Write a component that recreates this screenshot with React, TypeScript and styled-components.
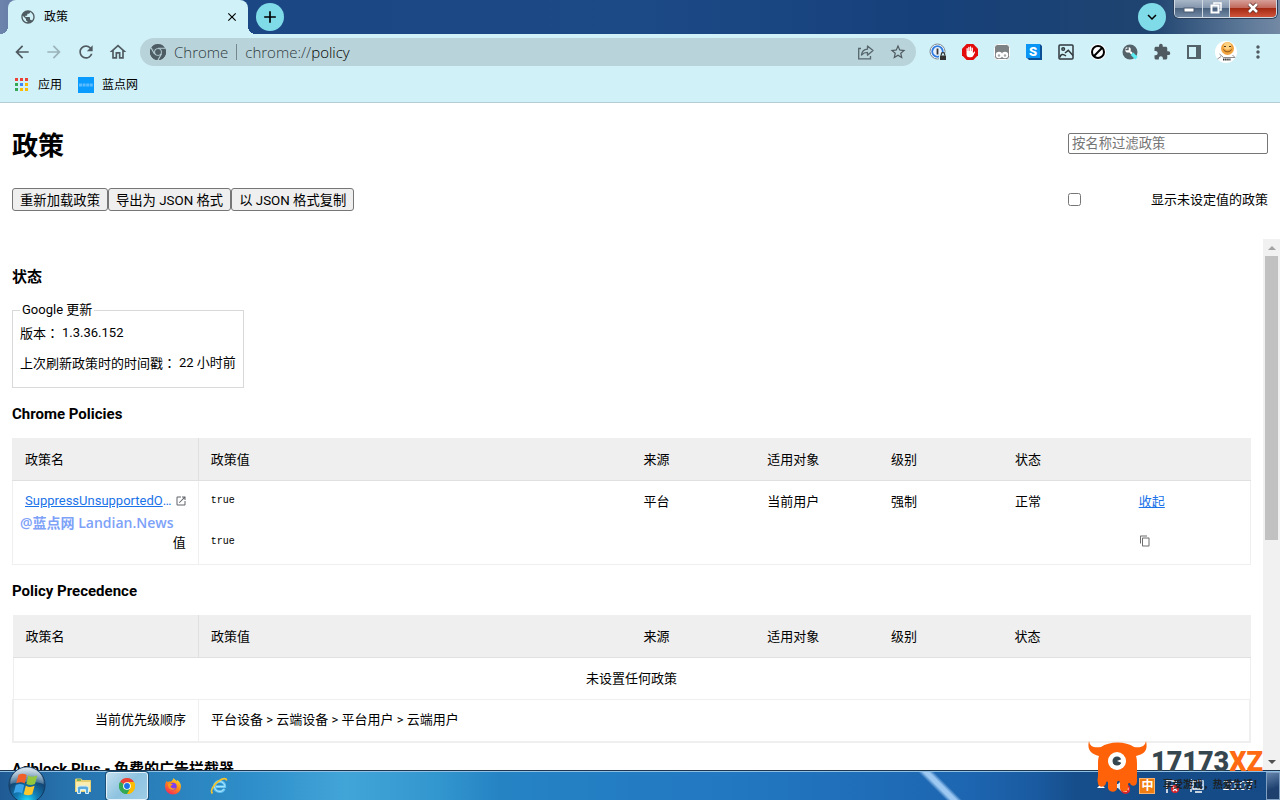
import React from "react";
import styled, { createGlobalStyle } from "styled-components";
import {
  MdPublic,
  MdClose,
  MdAdd,
  MdArrowBack,
  MdArrowForward,
  MdRefresh,
  MdOutlineHome,
  MdStarBorder,
  MdExtension,
  MdMoreVert,
  MdOpenInNew,
  MdContentCopy,
  MdKeyboardArrowDown,
} from "react-icons/md";

const pageFont = `Roboto, "Noto Sans CJK SC", sans-serif`;
const uiFont = `"Open Sans", "Noto Sans CJK SC", sans-serif`;

const GlobalStyle = createGlobalStyle`
  *, *::before, *::after { box-sizing: border-box; }
  body { margin: 0; background: #fff; color: #000; font: 13px/18px ${pageFont}; }
  svg { display: block; flex: none; }
`;

const Screen = styled.div`
  display: flex;
  flex-direction: column;
  height: 100vh;
  overflow: hidden;
  position: relative;
`;

/* ---------- browser frame ---------- */

const TitleBar = styled.header`
  flex: none;
  display: flex;
  align-items: flex-start;
  height: 34px;
  padding-left: 8px;
  background: linear-gradient(90deg, #6d84ac 0, #4b6a9c 60px, #1b4785 240px, #1c4a86 50%, #16407a 72%, #1f4470 90%, #5b7797 97%, #7389a4 100%);
`;

const Tab = styled.div`
  position: relative;
  display: flex;
  align-items: center;
  width: 240px;
  height: 34px;
  padding: 0 9px 0 12px;
  border-radius: 8px 8px 0 0;
  background: #d1f1f8;
  font: 12px/16px ${uiFont};
  &::before,
  &::after {
    content: "";
    position: absolute;
    bottom: 0;
    width: 8px;
    height: 8px;
  }
  &::before { left: -8px; background: radial-gradient(circle at 0 0, transparent 8px, #d1f1f8 8px); }
  &::after { right: -8px; background: radial-gradient(circle at 100% 0, transparent 8px, #d1f1f8 8px); }
`;

const TabTitle = styled.span`
  flex: 1;
  margin-left: 8px;
`;

const IconButton = styled.button<{ $size?: number; $color?: string }>`
  display: flex;
  align-items: center;
  justify-content: center;
  flex: none;
  width: ${(p) => p.$size ?? 20}px;
  height: ${(p) => p.$size ?? 20}px;
  padding: 0;
  border: 0;
  background: none;
  color: ${(p) => p.$color ?? "#4f5b60"};
`;

const RoundButton = styled(IconButton)`
  width: 28px;
  height: 28px;
  margin: 3px 8px 0;
  border-radius: 50%;
  background: #80dbe8;
  color: #000;
`;

const Spacer = styled.div`
  flex: 1;
`;

const WindowControls = styled.div`
  display: flex;
  height: 18px;
  margin: 0 3px 0 0;
  border: 1px solid #cfd9e4;
  border-top: 0;
  border-radius: 0 0 5px 5px;
  overflow: hidden;
  box-shadow: 0 0 0 1px #2c3f5a;
`;

const WindowButton = styled.button<{ $close?: boolean }>`
  display: flex;
  align-items: center;
  justify-content: center;
  width: ${(p) => (p.$close ? 47 : 27)}px;
  padding: 0 0 2px;
  border: 0;
  background: ${(p) =>
    p.$close
      ? "linear-gradient(#d6a099 0, #c26a5d 45%, #a52a14 50%, #d0543a 100%)"
      : "linear-gradient(#a9b7c8 0, #8496ad 45%, #4b627f 50%, #7189a5 100%)"};
  & + & { border-left: 1px solid #cfd9e4; }
`;

const Toolbar = styled.div`
  flex: none;
  display: flex;
  align-items: center;
  height: 36px;
  padding: 0 12px;
  gap: 12px;
  background: #d1f1f8;
`;

const Omnibox = styled.div`
  flex: 1;
  display: flex;
  align-items: center;
  height: 28px;
  padding: 0 8px 0 10px;
  border-radius: 14px;
  background: #b9d3da;
  font: 300 15px/20px ${uiFont};
  color: #2f3b40;
`;

const Origin = styled.span`
  margin: 0 8px;
  padding-right: 8px;
  line-height: 16px;
  border-right: 1px solid #74878d;
`;

const Address = styled.span`
  flex: 1;
  b { font-weight: 300; color: #000; }
`;

const OmniActions = styled.div`
  display: flex;
  gap: 12px;
`;

const Extensions = styled.div`
  display: flex;
  align-items: center;
  gap: 12px;
`;

const Bookmarks = styled.nav`
  flex: none;
  display: flex;
  align-items: center;
  gap: 16px;
  height: 33px;
  padding: 0 14px 2px;
  background: #d1f1f8;
  border-bottom: 1px solid #b4cdd3;
`;

const Bookmark = styled.a`
  display: flex;
  align-items: center;
  gap: 8px;
  color: #000;
  text-decoration: none;
  font: 12px/16px ${uiFont};
`;

/* ---------- policy page ---------- */

const PageHeader = styled.header`
  flex: none;
  display: flex;
  flex-direction: column;
  gap: 20px;
  height: 136px;
  padding: 21px 12px 0;
`;

const HeaderRow = styled.div`
  display: flex;
  align-items: center;
  justify-content: space-between;
`;

const Title = styled.h1`
  margin: 0;
  font-size: 26px;
  line-height: 44px;
  font-weight: 700;
`;

const FilterInput = styled.input`
  width: 200px;
  height: 21px;
  margin: 0 0 5px;
  padding: 1px 3px;
  border: 1px solid #767676;
  border-radius: 2px;
  font-family: ${pageFont};
  &::placeholder { color: #757575; }
`;

const ButtonGroup = styled.div`
  display: flex;
`;

const ActionButton = styled.button`
  height: 23px;
  padding: 0 7px;
  border: 1px solid #767676;
  border-radius: 3px;
  background: #efefef;
  color: #000;
  font-family: ${pageFont};
`;

const UnsetOption = styled.label`
  display: flex;
  align-items: center;
  justify-content: space-between;
  width: 200px;
  input { margin: 0; width: 13px; height: 13px; }
`;

const ScrollArea = styled.div`
  flex: 1;
  min-height: 0;
  display: flex;
`;

const Content = styled.main`
  flex: 1;
  min-width: 0;
  overflow: hidden;
  padding: 12px 12px 0;
`;

const Heading = styled.h2`
  margin: 16px 0 14px;
  font-size: 15px;
  line-height: 20px;
  font-weight: 700;
`;

const StatusBox = styled.fieldset`
  width: max-content;
  min-width: 0;
  margin: 0;
  padding: 5px 7px 14px;
  border: 1px solid #d9d9d9;
  legend { padding: 0 2px; }
`;

const StatusRow = styled.div`
  display: flex;
  gap: 3px;
  & + & { margin-top: 11px; }
`;

/* this face centres the full-width colon in its cell */
const Colon = styled.span`
  font-family: "Noto Sans CJK TC", sans-serif;
`;

const PolicyTable = styled.table`
  width: 100%;
  table-layout: fixed;
  border-collapse: collapse;
  border: 1px solid #efefef;
`;

const HeadCell = styled.th<{ $width: number }>`
  width: ${(p) => p.$width}%;
  height: 42px;
  padding: 1px 12px 0;
  text-align: left;
  font-weight: 400;
  background: #efefef;
  border-bottom: 1px solid #e0e0e0;
  &:first-child { border-right: 1px solid #e0e0e0; }
`;

const Cell = styled.td<{ $align?: string }>`
  height: 42px;
  padding: 0 12px;
  text-align: ${(p) => p.$align ?? "left"};
  &:first-child:not([colspan]) { border-right: 1px solid #efefef; }
`;

const Row = styled.tr<{ $framed?: boolean }>`
  ${(p) => p.$framed && "border: 2px solid #efefef; border-top-width: 1px;"}
`;

const PolicyName = styled.div`
  display: flex;
  align-items: center;
  gap: 2px;
  margin-right: -1px;
  padding-bottom: 2px;
  color: #5f6368;
  a {
    flex: 1;
    overflow: hidden;
    text-overflow: ellipsis;
    white-space: nowrap;
  }
`;

const Link = styled.a`
  color: #1a73e8;
  text-decoration: underline;
`;

const Value = styled.code`
  display: block;
  padding-bottom: 2px;
  font: 10px/18px "Liberation Mono", monospace;
`;

const CopyButton = styled(IconButton)`
  width: 12px;
  height: 12px;
  margin-bottom: 4px;
  color: #6e6e6e;
`;

const Scrollbar = styled.div`
  flex: none;
  display: flex;
  flex-direction: column;
  align-items: center;
  width: 17px;
  background: #f1f1f1;
`;

const Thumb = styled.div`
  width: 13px;
  height: 53.5%;
  background: #c1c1c1;
`;

const ScrollArrow = styled.div<{ $down?: boolean }>`
  display: flex;
  align-items: center;
  height: 17px;
  margin-top: ${(p) => (p.$down ? "auto" : "0")};
`;

const SourceMark = styled.div`
  position: absolute;
  left: 20px;
  top: 513px;
  color: #7da2f8;
  font: 600 14px/20px "Open Sans", "Noto Sans CJK SC", sans-serif;
`;

/* ---------- desktop taskbar ---------- */

const Taskbar = styled.footer`
  flex: none;
  position: relative;
  display: flex;
  align-items: center;
  height: 30px;
  border-top: 1px solid #1c3650;
  box-shadow: inset 0 1px 0 #8fc0e4;
  background:
    linear-gradient(45deg, transparent 41%, #9cc8f2 47%, #9cc8f2 53%, transparent 59%) 910px 0 / 60px 30px no-repeat,
    linear-gradient(90deg, #205a94 0, #2672ad 5%, #2e8fca 20%, #42a5d8 27%, #3397cf 34%, #2583c4 39%, #2277c1 58%, #1d65b0 76%, #1a5aa0 81%, #164e8b 84%, #154a85 100%);
`;

const StartSlot = styled.div`
  display: flex;
  width: 60px;
`;

const StartButton = styled.button`
  height: 29px;
  padding: 0 0 0 8px;
  border: 0;
  background: none;
  svg { margin-top: -5px; overflow: visible; }
`;

const TaskButton = styled.button<{ $active?: boolean }>`
  display: flex;
  align-items: center;
  justify-content: center;
  width: ${(p) => (p.$active ? 42 : 46)}px;
  height: 28px;
  margin-right: ${(p) => (p.$active ? 2 : 0)}px;
  padding: 0;
  border: 1px solid ${(p) => (p.$active ? "#e4f3fb" : "transparent")};
  border-radius: 3px;
  background: ${(p) => (p.$active ? "linear-gradient(135deg, #c2dfef, #8ec3e0 50%, #9dcde6)" : "none")};
  box-shadow: ${(p) => (p.$active ? "0 0 0 1px #1d4e74" : "none")};
`;

const Tray = styled.div`
  display: flex;
  align-items: center;
  gap: 9px;
  margin-left: auto;
  color: #fff;
  font: 12px/16px ${uiFont};
`;

const Clock = styled.time`
  margin: 0 4px 0 8px;
`;

const Ime = styled.span`
  width: 16px;
  height: 16px;
  background: #f07d12;
  border: 1px solid #f9b06a;
  text-align: center;
  font-weight: 700;
  line-height: 14px;
`;

const ShowDesktop = styled.button`
  width: 14px;
  height: 28px;
  padding: 0;
  border: 1px solid #7f9fc3;
  background: linear-gradient(160deg, #6484ab, #1d406f 60%);
`;

const SiteBadge = styled.div`
  position: absolute;
  right: 17px;
  bottom: 7px;
  display: flex;
  align-items: flex-end;
  gap: 3px;
`;

const BadgeText = styled.div`
  display: flex;
  flex-direction: column;
  align-items: flex-end;
  color: #37474f;
  strong {
    font: 900 27px/30px Roboto, sans-serif;
    white-space: nowrap;
  }
  em { font-style: normal; color: #ff6a13; }
  small { font: 700 10px/16px ${pageFont}; color: #1c2226; white-space: nowrap; }
`;

/* ---------- drawings ---------- */

const ChromeMark = ({ size, mono }: { size: number; mono?: boolean }) => {
  const c = mono ? ["#4e5d63", "#4e5d63", "#4e5d63"] : ["#ea4335", "#fbbc04", "#34a853"];
  return (
    <svg width={size} height={size} viewBox="0 0 24 24">
      <path d="M12 12 1.6 6A12 12 0 0 1 22.4 6Z" fill={c[0]} />
      <path d="M12 12 22.4 6A12 12 0 0 1 12 24Z" fill={c[1]} />
      <path d="M12 12V24A12 12 0 0 1 1.6 6Z" fill={c[2]} />
      <path d="M12 6h10.4A12 12 0 0 1 12 24l5.2-9Z" fill={c[1]} />
      <path d="M6.8 15 1.6 6A12 12 0 0 0 12 24l5.2-9Z" fill={c[2]} />
      {mono && <path d="M12 6.3h11M6.8 15 1.6 6M17.2 15 12 24" stroke="#b9d3da" strokeWidth="1.6" />}
      <circle cx="12" cy="12" r="5.8" fill={mono ? "#b9d3da" : "#fff"} />
      <circle cx="12" cy="12" r="4.4" fill={mono ? "#4e5d63" : "#1a73e8"} />
    </svg>
  );
};

const ShareIcon = () => (
  <svg width="18" height="18" viewBox="0 0 18 18" fill="none" stroke="#56666c" strokeWidth="1.3">
    <path d="M4 5.500H1.700v10.300H13.500V13" />
    <path d="M4.500 12c.4-3.800 2.500-5.600 6-5.800V3l5.500 4.600-5.500 4.600V9.300C7.900 9.300 6 10.200 4.500 12Z" strokeLinejoin="round" />
  </svg>
);

const OnePassword = () => (
  <svg width="20" height="20" viewBox="0 0 20 20">
    <circle cx="9.500" cy="9.500" r="7.500" fill="#fff" stroke="#7b8790" />
    <circle cx="9.500" cy="9.500" r="5.300" fill="#e9f2fc" stroke="#2f7de0" strokeWidth="1.800" />
    <path d="M9.500 6.500v6" stroke="#333" strokeWidth="1.800" />
    <rect x="11" y="11" width="8" height="8" rx="2" fill="#d1f1f8" />
    <rect x="12" y="13.500" width="6" height="4.500" fill="#333" />
    <path d="M13.300 13.500v-1.200a1.700 1.700 0 0 1 3.400 0v1.200" fill="none" stroke="#333" strokeWidth="1.200" />
  </svg>
);

const BlockHand = () => (
  <svg width="18" height="18" viewBox="0 0 18 18">
    <path d="M5.700 1h6.600L17 5.700v6.600L12.300 17H5.700L1 12.300V5.700Z" fill="#e30b0b" />
    <path d="M5.500 9.500V5.600c0-.9 1.300-.9 1.300 0V8h.4V4.400c0-.9 1.300-.9 1.300 0V8h.4V4c0-.9 1.300-.9 1.300 0v4h.4V5.200c0-.9 1.300-.9 1.300 0v5l1-1.300c.6-.7 1.500-.1 1.100.700l-2 3.600c-.8 1.300-5 1.500-6 0-.4-.8-.5-2-.5-3.700Z" fill="#fff" />
  </svg>
);

const MonkeyIcon = () => (
  <svg width="18" height="18" viewBox="0 0 18 18">
    <rect x="1.500" y="1.500" width="15" height="15" rx="3" fill="#7d8284" stroke="#fff" />
    <circle cx="6" cy="12" r="3.200" fill="#fff" />
    <circle cx="12" cy="12" r="3.200" fill="#fff" />
    <circle cx="6" cy="12.500" r="1.200" fill="#a5a9ab" />
    <circle cx="12" cy="12.500" r="1.200" fill="#a5a9ab" />
  </svg>
);

const LetterCube = () => (
  <svg width="18" height="18" viewBox="0 0 18 18">
    <path d="M1 1h14l2 2v14H4l-3-3Z" fill="#0a4f96" />
    <rect x="1" y="1" width="14" height="14" fill="#0b96f5" />
    <text x="8" y="12.500" textAnchor="middle" fill="#fff" fontFamily="Roboto" fontWeight="900" fontSize="13">S</text>
  </svg>
);

const PictureIcon = () => (
  <svg width="18" height="18" viewBox="0 0 18 18" fill="none" stroke="#30383c" strokeWidth="1.500">
    <rect x="2" y="2" width="14" height="14" rx="1" />
    <circle cx="6.200" cy="6" r="1.300" />
    <path d="M3 14.500c.5-3.500 3-3.800 6-1.500M8 10l3.300-2.700L16 12.500" />
  </svg>
);

const BanIcon = () => (
  <svg width="18" height="18" viewBox="0 0 18 18">
    <circle cx="9" cy="9" r="8" fill="#fff" />
    <circle cx="9" cy="9" r="6" fill="none" stroke="#000" strokeWidth="2" />
    <path d="m4.800 13.200 8.400-8.400" stroke="#000" strokeWidth="2" />
  </svg>
);

const KeyTool = () => (
  <svg width="18" height="18" viewBox="0 0 18 18">
    <circle cx="9" cy="9" r="7.500" fill="#54626a" />
    <circle cx="7" cy="6.800" r="2.800" fill="#fff" />
    <path d="M7 3.500v3H4.500" fill="none" stroke="#54626a" strokeWidth="1.400" />
    <path d="m9 8.800 2 2" stroke="#fff" strokeWidth="2.200" />
    <path d="m11 10.800 4.500 4.500" stroke="#5bedf2" strokeWidth="3.600" />
  </svg>
);

const SidePanel = () => (
  <svg width="16" height="16" viewBox="0 0 16 16">
    <path d="M1 1h14v14H1Z" fill="#54626a" />
    <path d="M3 3h7v10H3Z" fill="#d1f1f8" />
  </svg>
);

const Avatar = () => (
  <svg width="22" height="22" viewBox="0 0 22 22">
    <circle cx="11" cy="11" r="11" fill="#fff" />
    <circle cx="12.500" cy="7.500" r="6.500" fill="#f0a440" />
    <circle cx="12.500" cy="5" r="3.800" fill="#fbd080" />
    <path d="M9 5.500h2M14 5.500h2" stroke="#4c3414" />
    <path d="M8.500 8.500c1.500 3 6.500 3 8 0" fill="none" stroke="#7d4c14" />
    <path d="m4.500 13 4 3.500H20L17.500 14M2.500 18 6 15.500" fill="none" stroke="#8c8c8c" />
    <path d="M8 18.500h7.500" stroke="#333" strokeWidth="2" strokeDasharray="1.500 .6" />
  </svg>
);

const AppsGrid = () => (
  <svg width="16" height="14" viewBox="0 0 16 14">
    {["#ea4335", "#ea4335", "#ea4335", "#34a853", "#4285f4", "#fbbc04", "#34a853", "#fbbc04", "#fbbc04"].map((c, i) => (
      <rect key={i} x={1 + (i % 3) * 5} y={Math.floor(i / 3) * 5} width="3" height="3" fill={c} />
    ))}
  </svg>
);

const SiteIcon = () => (
  <svg width="16" height="16" viewBox="0 0 16 16">
    <rect width="16" height="16" fill="#0a9bff" />
    <path d="M1 8h14" stroke="#5bbcff" strokeWidth="3" strokeDasharray="3 .6" />
  </svg>
);

const StartOrb = () => (
  <svg width="38" height="38" viewBox="0 0 38 38">
    <defs>
      <radialGradient id="orb" cx="50%" cy="95%" r="85%">
        <stop offset="0" stopColor="#1fe0ff" />
        <stop offset=".35" stopColor="#137fb8" />
        <stop offset=".75" stopColor="#124674" />
        <stop offset="1" stopColor="#8fadc4" />
      </radialGradient>
      <linearGradient id="orbGloss" x1="0" y1="0" x2="0" y2="1">
        <stop offset="0" stopColor="#e7eff5" stopOpacity=".9" />
        <stop offset="1" stopColor="#7fa3bf" stopOpacity=".45" />
      </linearGradient>
    </defs>
    <circle cx="19" cy="19" r="18" fill="url(#orb)" stroke="#12395f" />
    <path d="M2.500 18a16.500 16.500 0 0 1 33 0c-8-3-24-3-33 0Z" fill="url(#orbGloss)" />
    <path d="M10.500 8.800c3-1.600 5.600-1.500 8.200.1l-2 8.500c-2.500-1.600-5-1.700-8.500-.2Z" fill="#f0602a" />
    <path d="M20.300 9.500c2.700 1.500 5.200 1.600 9 .1l-2.300 8.500c-3 1.400-5.900 1.300-8.600-.1Z" fill="#93c83e" />
    <path d="M7.800 19c3.200-1.500 5.800-1.400 8.400.1l-2.100 8.500c-2.500-1.600-5-1.700-8.500-.2Z" fill="#3ba3e8" />
    <path d="M17.800 19.700c2.700 1.500 5.600 1.600 8.800.1l-2.300 8.500c-3 1.400-5.900 1.300-8.600-.1Z" fill="#fcc82e" />
  </svg>
);

const FolderIcon = () => (
  <svg width="18" height="18" viewBox="0 0 18 18">
    <path d="M1 3c0-1 .5-1.500 1.500-1.500H7L8.500 3H16c.7 0 1 .4 1 1v11H1Z" fill="#e7cf73" />
    <path d="M2 5h14v9H2Z" fill="#f8ecae" />
    <path d="M3 3h4" stroke="#49a84d" strokeWidth="1.300" />
    <path d="M3.500 16.500v-5c0-1.500 1-2.500 2.500-2.500h6c1.500 0 2.500 1 2.500 2.500v5h-3v-4h-5v4Z" fill="#5aabdd" stroke="#d7eefb" />
  </svg>
);

const FirefoxIcon = () => (
  <svg width="18" height="18" viewBox="0 0 18 18">
    <defs>
      <linearGradient id="fox" x1=".8" y1="0" x2=".2" y2="1">
        <stop offset="0" stopColor="#ffe226" />
        <stop offset=".45" stopColor="#ff8a16" />
        <stop offset="1" stopColor="#f5235f" />
      </linearGradient>
    </defs>
    <path d="M9.500 1c1 1.700 2.700 2 3.300 3.300.4-.4.300-1 .1-1.500 3 2 4.100 4.500 4.100 6.700A8 8 0 0 1 1 9.500c0-2.700.8-4.500 2-6 0 .8.200 1.300.6 1.700.8-.7 2.200-.9 3.200-.4C7.600 4 8.800 3.200 9.500 1Z" fill="url(#fox)" />
    <circle cx="9" cy="9.500" r="3.700" fill="#7b3ff0" />
    <path d="M4 7c1.800-1 3.800-.4 5 .8-1.700.1-1.900 1.200-2.600 1.500.6 2 3 2.800 5.400 1.700-1.800 3.300-8 2.300-7.800-4Z" fill="#ff9a1c" />
  </svg>
);

const ExplorerIcon = () => (
  <svg width="18" height="18" viewBox="0 0 18 18" fill="none">
    <path d="M14.300 11.800c-2.300 4.500-9.800 3.200-9.800-2.400 0-6.800 10.500-6.300 10.300.2H6" stroke="#62c3f2" strokeWidth="2.800" />
    <path d="M14.300 11.800c-2.300 4.500-9.800 3.200-9.800-2.400 0-6.800 10.500-6.300 10.300.2H6" stroke="#b3e6fb" strokeWidth="1" />
    <path d="M2.500 16.500C-.5 14 4 7 9.500 3.500c3.500-2.300 7-2.800 7 0" stroke="#f4c32b" strokeWidth="1.700" />
  </svg>
);

const Monster = () => (
  <svg width="60" height="54" viewBox="0 0 60 54">
    <path
      d="M1 2c1 6 5 7 12 6C21 2 38 2 46 8c6 1 11 0 12-6 2 9-1 13-10 15 1 3 1 6 1 10v15c0 6-6 6-7 2-1 0-2 0-2 1v4c0 5-7 5-8 0v-5c0-3-3-3-3 0v5c0 5-8 5-9 0v-5c0-2-2-2-2 0-1 5-8 5-8 0-1-3 0-5 0-8V27c0-4 0-7 1-10C2 15-1 10 1 2Z"
      fill="#ff6208"
    />
    <circle cx="29" cy="22" r="9" fill="#fff" />
    <circle cx="29" cy="22" r="4.500" fill="#37474f" />
    <path d="m29 22 5-2v4Z" fill="#fff" />
  </svg>
);

const TrayArrow = () => (
  <svg width="8" height="4" viewBox="0 0 8 4"><path d="m4 0 4 4H0Z" fill="#fff" /></svg>
);

const MutedSpeaker = () => (
  <svg width="16" height="16" viewBox="0 0 16 16" fill="none">
    <path d="M1 6h3l4-4v12l-4-4H1Z" fill="#dfe8f0" />
    <circle cx="11.500" cy="11" r="4" fill="#fff" stroke="#d9242b" strokeWidth="1.800" />
    <path d="m8.700 8.200 5.600 5.600" stroke="#d9242b" strokeWidth="1.800" />
  </svg>
);

const FlagIcon = () => (
  <svg width="16" height="16" viewBox="0 0 16 16" fill="none">
    <path d="M3 2v13M3 3h9v5H3" stroke="#fff" strokeWidth="1.500" />
    <circle cx="11" cy="11" r="4" fill="#d9242b" />
    <path d="m9 9 4 4m0-4-4 4" stroke="#fff" strokeWidth="1.300" />
  </svg>
);

const NetworkIcon = () => (
  <svg width="16" height="16" viewBox="0 0 16 16" fill="none">
    <path d="M4 3h10v8H4ZM6 14h7M2 1v13" stroke="#fff" strokeWidth="1.400" />
  </svg>
);

/* ---------- page ---------- */

const columns: [string, number][] = [
  ["政策名", 15],
  ["政策值", 35],
  ["来源", 10],
  ["适用对象", 10],
  ["级别", 10],
  ["状态", 10],
  ["", 10],
];

const TableHead = () => (
  <thead>
    <tr>
      {columns.map(([name, width]) => (
        <HeadCell key={name} $width={width} scope="col">{name}</HeadCell>
      ))}
    </tr>
  </thead>
);

const extensions: [string, React.ReactNode][] = [
  ["1Password", <OnePassword />],
  ["AdBlock", <BlockHand />],
  ["Tampermonkey", <MonkeyIcon />],
  ["S", <LetterCube />],
  ["图片", <PictureIcon />],
  ["禁用", <BanIcon />],
  ["工具", <KeyTool />],
  ["扩展程序", <MdExtension size={18} />],
  ["侧边栏", <SidePanel />],
  ["个人资料", <Avatar />],
];

export default function App() {
  return (
    <Screen>
      <GlobalStyle />
      <TitleBar>
        <Tab>
          <MdPublic size={16} color="#4f5b60" />
          <TabTitle>政策</TabTitle>
          <IconButton $size={14} $color="#000" aria-label="关闭标签页"><MdClose size={14} /></IconButton>
        </Tab>
        <RoundButton aria-label="新标签页"><MdAdd size={20} /></RoundButton>
        <Spacer />
        <RoundButton aria-label="搜索标签页"><MdKeyboardArrowDown size={18} /></RoundButton>
        <WindowControls>
          <WindowButton aria-label="最小化">
            <svg width="12" height="12" viewBox="0 0 12 12"><rect x="1" y="6" width="10" height="4" fill="#fff" stroke="#4a5a70" /></svg>
          </WindowButton>
          <WindowButton aria-label="还原">
            <svg width="12" height="12" viewBox="0 0 12 12" fill="none" stroke="#fff" strokeWidth="1.500">
              <path d="M4 2.500V1h7v7H9.500" /><rect x="1.500" y="3.500" width="7" height="7" strokeWidth="2" />
            </svg>
          </WindowButton>
          <WindowButton $close aria-label="关闭">
            <svg width="12" height="12" viewBox="0 0 12 12"><path d="m2 2 8 8m0-8-8 8" stroke="#5c2a26" strokeWidth="4" /><path d="m2 2 8 8m0-8-8 8" stroke="#fff" strokeWidth="2.600" /></svg>
          </WindowButton>
        </WindowControls>
      </TitleBar>

      <Toolbar>
        <IconButton aria-label="后退"><MdArrowBack size={20} /></IconButton>
        <IconButton $color="#9bb3ba" aria-label="前进"><MdArrowForward size={20} /></IconButton>
        <IconButton aria-label="重新加载"><MdRefresh size={20} /></IconButton>
        <IconButton aria-label="主页"><MdOutlineHome size={20} /></IconButton>
        <Omnibox>
          <ChromeMark size={16} mono />
          <Origin>Chrome</Origin>
          <Address>chrome://<b>policy</b></Address>
          <OmniActions>
            <IconButton aria-label="分享"><ShareIcon /></IconButton>
            <IconButton aria-label="收藏"><MdStarBorder size={18} /></IconButton>
          </OmniActions>
        </Omnibox>
        <Extensions>
          {extensions.map(([name, icon]) => (
            <IconButton key={name} aria-label={name}>{icon}</IconButton>
          ))}
          <IconButton aria-label="菜单"><MdMoreVert size={20} /></IconButton>
        </Extensions>
      </Toolbar>

      <Bookmarks>
        <Bookmark href="#apps"><AppsGrid />应用</Bookmark>
        <Bookmark href="#landian"><SiteIcon />蓝点网</Bookmark>
      </Bookmarks>

      <PageHeader>
        <HeaderRow>
          <Title>政策</Title>
          <FilterInput type="search" placeholder="按名称过滤政策" aria-label="按名称过滤政策" />
        </HeaderRow>
        <HeaderRow>
          <ButtonGroup>
            <ActionButton>重新加载政策</ActionButton>
            <ActionButton>导出为 JSON 格式</ActionButton>
            <ActionButton>以 JSON 格式复制</ActionButton>
          </ButtonGroup>
          <UnsetOption>
            <input type="checkbox" />
            <span>显示未设定值的政策</span>
          </UnsetOption>
        </HeaderRow>
      </PageHeader>

      <ScrollArea>
        <Content>
          <Heading>状态</Heading>
          <StatusBox>
            <legend>Google 更新</legend>
            <StatusRow><span>版本<Colon>：</Colon></span><span>1.3.36.152</span></StatusRow>
            <StatusRow><span>上次刷新政策时的时间戳<Colon>：</Colon></span><span>22 小时前</span></StatusRow>
          </StatusBox>

          <Heading>Chrome Policies</Heading>
          <PolicyTable>
            <TableHead />
            <tbody>
              <Row>
                <Cell>
                  <PolicyName>
                    <Link href="#policy">SuppressUnsupportedOSWarning</Link>
                    <MdOpenInNew size={12} />
                  </PolicyName>
                </Cell>
                <Cell><Value>true</Value></Cell>
                <Cell>平台</Cell>
                <Cell>当前用户</Cell>
                <Cell>强制</Cell>
                <Cell>正常</Cell>
                <Cell><Link href="#collapse">收起</Link></Cell>
              </Row>
              <Row>
                <Cell $align="right">值</Cell>
                <Cell colSpan={5}><Value>true</Value></Cell>
                <Cell><CopyButton aria-label="复制"><MdContentCopy size={12} /></CopyButton></Cell>
              </Row>
            </tbody>
          </PolicyTable>

          <Heading>Policy Precedence</Heading>
          <PolicyTable>
            <TableHead />
            <tbody>
              <Row><Cell colSpan={7} $align="center">未设置任何政策</Cell></Row>
              <Row $framed>
                <Cell $align="right">当前优先级顺序</Cell>
                <Cell colSpan={6}>平台设备 &gt; 云端设备 &gt; 平台用户 &gt; 云端用户</Cell>
              </Row>
            </tbody>
          </PolicyTable>

          <Heading>Adblock Plus - 免费的广告拦截器</Heading>
        </Content>
        <Scrollbar aria-hidden="true">
          <ScrollArrow><svg width="8" height="4" viewBox="0 0 8 4"><path d="m4 0 4 4H0Z" fill="#a3a3a3" /></svg></ScrollArrow>
          <Thumb />
          <ScrollArrow $down><svg width="8" height="4" viewBox="0 0 8 4"><path d="M0 0h8L4 4Z" fill="#505050" /></svg></ScrollArrow>
        </Scrollbar>
      </ScrollArea>
      <SourceMark>@蓝点网 Landian.News</SourceMark>

      <Taskbar>
        <StartSlot><StartButton aria-label="开始"><StartOrb /></StartButton></StartSlot>
        <TaskButton aria-label="资源管理器"><FolderIcon /></TaskButton>
        <TaskButton $active aria-label="Chrome"><ChromeMark size={16} /></TaskButton>
        <TaskButton aria-label="Firefox"><FirefoxIcon /></TaskButton>
        <TaskButton aria-label="Internet Explorer"><ExplorerIcon /></TaskButton>
        <Tray>
          <TrayArrow />
          <MutedSpeaker />
          <Ime>中</Ime>
          <FlagIcon />
          <NetworkIcon />
          <Clock>20:07</Clock>
          <ShowDesktop aria-label="显示桌面" />
        </Tray>
      </Taskbar>
      <SiteBadge>
        <Monster />
        <BadgeText>
          <strong>17173<em>XZ</em></strong>
          <small>享受游戏，热爱生活！</small>
        </BadgeText>
      </SiteBadge>
    </Screen>
  );
}
